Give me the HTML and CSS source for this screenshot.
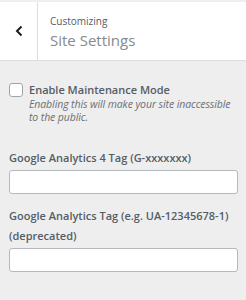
FILE: index.html
```html
<!DOCTYPE html>
<html lang="en">
<head>
    <meta charset="UTF-8">
    <meta name="viewport" content="width=device-width, initial-scale=1.0">
    <title>Site Settings</title>
    <link rel="stylesheet" href="styles.css">
</head>
<body>
    <div class="section-header">
        <button class="back-btn" aria-label="Back">
            <svg width="8" height="12" viewBox="0 0 8 12"><path d="M6.5 1.5 L2 6 L6.5 10.5" fill="none" stroke="#1e1e1e" stroke-width="2"/></svg>
        </button>
        <div class="section-title">
            <span class="action">Customizing</span>
            <h3>Site Settings</h3>
        </div>
    </div>

    <div class="controls">
        <div class="control checkbox-control">
            <input type="checkbox" id="maintenance">
            <div>
                <label for="maintenance" class="control-title">Enable Maintenance Mode</label>
                <span class="description">Enabling this will make your site inaccessible to the public.</span>
            </div>
        </div>

        <div class="control">
            <label for="ga4" class="control-title">Google Analytics 4 Tag (G-xxxxxxx)</label>
            <input type="text" id="ga4">
        </div>

        <div class="control">
            <label for="ua" class="control-title">Google Analytics Tag (e.g. UA-12345678-1) (deprecated)</label>
            <input type="text" id="ua">
        </div>
    </div>
</body>
</html>
```

FILE: styles.css
```css
body {
    font-family: "Open Sans", "Noto Sans", sans-serif;
    font-size: 11px;
    background: #eeeeee;
    color: #555d66;
    margin: 0;
    padding-top: 2px;
}

.section-header {
    display: flex;
    height: 58px;
    background: #fff;
    border-bottom: 1px solid #dddddd;
}

.back-btn {
    width: 38px;
    padding: 0;
    border: none;
    border-right: 1px solid #dddddd;
    background: #fff;
    display: flex;
    align-items: center;
    justify-content: center;
}

.section-title {
    padding: 11px 0 0 12px;
}

.action {
    display: block;
    font-size: 10px;
    line-height: 16px;
    color: #555d66;
}

.section-title h3 {
    margin: 0;
    font-size: 15px;
    font-weight: 400;
    line-height: 22px;
    color: #858a8f;
}

.controls {
    padding: 21px 8px 0 9px;
}

.control {
    margin-bottom: 12px;
}

.checkbox-control {
    display: flex;
    gap: 6px;
    margin-bottom: 24px;
}

.checkbox-control input {
    appearance: none;
    width: 14px;
    height: 14px;
    margin: 1px 0 0;
    border: 1px solid #a0a5aa;
    border-radius: 3px;
    background: #fff;
    flex-shrink: 0;
}

.control-title {
    display: block;
    font-weight: 600;
    line-height: 20px;
}

.checkbox-control .control-title {
    line-height: 16px;
}

.description {
    display: block;
    font-style: italic;
    font-size: 10.5px;
    letter-spacing: -0.1px;
    line-height: 13px;
    color: #6c7075;
}

.control input[type="text"] {
    display: block;
    box-sizing: border-box;
    width: 100%;
    height: 24px;
    margin-top: 2px;
    border: 1px solid #b4b9be;
    border-radius: 3px;
    background: #fff;
}
```
